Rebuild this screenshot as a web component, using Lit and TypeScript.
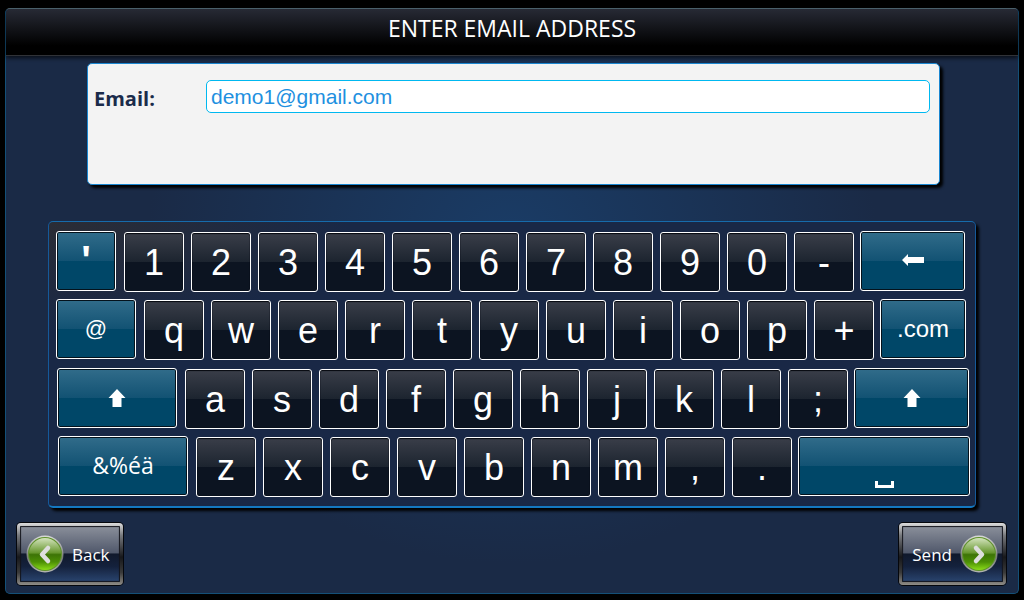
import { LitElement, html, css, svg, nothing } from "lit";
import { customElement, property, state } from "lit/decorators.js";
import { styleMap } from "lit/directives/style-map.js";

type Row = { lead: string; leadSize: number; keys: string; trail: string; trailSize: number };

const ROWS: Row[] = [
  { lead: "'", leadSize: 60, keys: "1234567890-", trail: "backspace", trailSize: 105 },
  { lead: "@", leadSize: 80, keys: "qwertyuiop+", trail: ".com", trailSize: 86 },
  { lead: "shift", leadSize: 120, keys: "asdfghjkl;", trail: "shift", trailSize: 115 },
  { lead: "&%éä", leadSize: 130, keys: "zxcvbnm,.", trail: "space", trailSize: 172 },
];

// One letter key plus its gap; the letter block also carries its side spacing.
const PITCH = 67;
const KEY_GAP = 7;
const SIDE_SPACE = 14;

const columns = (row: Row) => {
  const letters = row.keys.length * PITCH - KEY_GAP + SIDE_SPACE;
  return [row.leadSize, letters, row.trailSize].map((n) => `minmax(0, ${n}fr)`).join(" ");
};

@customElement("soft-keyboard")
export class SoftKeyboard extends LitElement {
  static styles = css`
    :host { display: block; }
    .board {
      box-sizing: border-box;
      min-height: 287px;
      display: grid;
      align-content: space-between;
      padding: 9px 5px 9px 7px;
      border: 1px solid #15599a;
      border-top-color: #166bab;
      border-bottom: 2px solid #1478c0;
      border-radius: 5px;
      background:
        radial-gradient(ellipse 300px 110px at 0 0, rgba(48, 46, 48, 0.75), transparent),
        #192846;
      box-shadow: 3px 3px 3px #000;
    }
    .row { display: grid; }
    .row0 { padding-right: 5px; }
    .row1 { padding-right: 4px; }
    .row2 { padding: 0 1px; }
    .row3 { padding-left: 2px; }
    .letters { display: flex; gap: 7px; margin: 1px 6px 0 8px; }
    button {
      box-sizing: border-box;
      height: 60px;
      min-width: 0;
      padding: 0;
      margin: 0;
      border: 1px solid #fff;
      border-radius: 3px;
      color: #fff;
      font-family: "Liberation Sans", Arial, sans-serif;
    }
    .letter {
      flex: 1 1 0;
      padding-top: 2px;
      font-size: 36px;
      line-height: 56px;
      background: linear-gradient(#3b3f4a, #1c242f 50%, #0c1421 50%, #0c1421) border-box;
      box-shadow: inset 0 1px 1px #05080f, inset 0 0 1px #05080f;
    }
    .special {
      font-size: 24px;
      line-height: 56px;
      background: linear-gradient(#326d8b, #125273 50%, #004768 50%, #004768) border-box;
      box-shadow: inset 0 0 0 1px #04121c;
    }
    .quote {
      padding-bottom: 4px;
      font: 700 40px/40px "Open Sans", sans-serif;
    }
    .symbols {
      padding-bottom: 2px;
      font-family: "Open Sans", sans-serif;
      font-size: 23px;
    }
    .at { font-size: 22px; }
    .backspace { padding-bottom: 2px; }
    .space { padding-top: 37px; }
    svg { display: block; margin: 0 auto; fill: #fff; }
  `;

  private press(value: string) {
    this.dispatchEvent(new CustomEvent("key", { detail: value }));
  }

  private face(name: string) {
    if (name === "shift")
      return html`<svg width="18" height="18" viewBox="0 0 18 18"><path d="M9 0 17.5 9H13.5V18H4.5V9H.5Z"/></svg>`;
    if (name === "backspace")
      return html`<svg width="22" height="12" viewBox="0 0 22 12"><path d="M0 6 6 0V3H22V9H6V12Z"/></svg>`;
    if (name === "space")
      return html`<svg width="19" height="7" viewBox="0 0 19 7"><path d="M0 0H3V4H16V0H19V7H0Z"/></svg>`;
    return name;
  }

  private special(name: string) {
    const kinds: Record<string, string> = {
      "'": "quote",
      "@": "at",
      "&%éä": "symbols",
      backspace: "backspace",
      space: "space",
    };
    return html`<button
      type="button"
      class="special ${kinds[name] ?? ""}"
      aria-label=${name}
      @click=${() => this.press(name)}
    >${this.face(name)}</button>`;
  }

  render() {
    return html`<div class="board">
      ${ROWS.map(
        (row, i) => html`<div class="row row${i}" style=${styleMap({ gridTemplateColumns: columns(row) })}>
          ${this.special(row.lead)}
          <div class="letters">
            ${[...row.keys].map(
              (k) => html`<button type="button" class="letter" @click=${() => this.press(k)}>${k}</button>`
            )}
          </div>
          ${this.special(row.trail)}
        </div>`
      )}
    </div>`;
  }
}

@customElement("nav-button")
export class NavButton extends LitElement {
  @property() label = "";
  @property() direction: "back" | "forward" = "back";

  static styles = css`
    :host { display: block; }
    button {
      box-sizing: border-box;
      display: flex;
      align-items: center;
      gap: 8px;
      height: 62px;
      margin: 0;
      padding: 0 10px 0 6px;
      border: 3px solid transparent;
      border-radius: 4px;
      color: #fff;
      font: 17px/24px "Open Sans", sans-serif;
      background:
        linear-gradient(#8b909b, #50586b 48%, #10192c 50%, #14213c 72%, #2a4570) padding-box,
        linear-gradient(#dcdcdc, #77797d 20%, #17181b 55%, #3a3a3a 80%, #8f8c86) border-box;
      box-shadow: inset 0 0 1px 1px #14161c, 0 0 0 1px #05070c;
    }
    .forward { flex-direction: row-reverse; padding: 0 5px 0 10px; }
    .text { padding-top: 2px; }
    svg { display: block; }
  `;

  render() {
    const back = this.direction === "back";
    return html`<button type="button" class=${back ? nothing : "forward"}>
      <svg width="38" height="40" viewBox="0 0 38 40" aria-hidden="true">
        <defs>
          <linearGradient id="ring" x1="0" y1="0" x2="0" y2="1">
            <stop offset="0" stop-color="#d9dbd8"/><stop offset=".6" stop-color="#777c78"/><stop offset="1" stop-color="#b4b6b2"/>
          </linearGradient>
          <linearGradient id="ball" x1="0" y1="0" x2="0" y2="1">
            <stop offset="0" stop-color="#d3e3bd"/><stop offset=".46" stop-color="#68982f"/>
            <stop offset=".52" stop-color="#3d7406"/><stop offset=".75" stop-color="#4c8f05"/><stop offset="1" stop-color="#8bdd18"/>
          </linearGradient>
        </defs>
        <circle cx="19" cy="20" r="18.5" fill="url(#ring)"/>
        <circle cx="19" cy="20" r="17" fill="#5f912a"/>
        <circle cx="19" cy="20" r="16" fill="url(#ball)"/>
        ${svg`<path d=${back ? "M22 14 16 20.500 22 27" : "M16 14 22 20.500 16 27"} fill="none" stroke="#dedede" stroke-width="4.500" stroke-linecap="round" stroke-linejoin="round"/>`}
      </svg>
      <span class="text">${this.label}</span>
    </button>`;
  }
}

@customElement("app-root")
export class AppRoot extends LitElement {
  @state() private email = "demo1@gmail.com";

  static styles = css`
    :host {
      display: flex;
      box-sizing: border-box;
      min-height: 100vh;
      padding: 8px 5px 6px;
      background: #000;
    }
    .frame {
      flex: 1;
      min-width: 0;
      display: flex;
      flex-direction: column;
      border: 1px solid #145078;
      border-top-color: #526a76;
      border-radius: 5px;
      background: radial-gradient(ellipse 36% 55% at 50% 40%, #1a3c66, #1a2a46) #1a2a46;
    }
    header {
      border-bottom: 1px solid #303237;
      border-radius: 4px 4px 0 0;
      background: linear-gradient(#272a35, #000 80%);
      box-shadow: 0 2px 4px rgba(0, 0, 0, 0.7);
    }
    h1 {
      margin: 0;
      padding-bottom: 8px;
      color: #fff;
      text-align: center;
      font: 400 23px/38px "Open Sans", sans-serif;
    }
    .card {
      box-sizing: border-box;
      display: flex;
      align-items: flex-start;
      min-height: 122px;
      margin: 7px 78px 36px 81px;
      padding: 16px 9px 16px 6px;
      border: 1px solid #1a86d0;
      border-radius: 5px;
      background: #f3f3f3;
      box-shadow: 3px 3px 3px #000;
    }
    label {
      flex: 0 0 112px;
      color: #1a2b4a;
      font: 700 20px/38px "Open Sans", sans-serif;
    }
    input {
      box-sizing: border-box;
      flex: 1;
      min-width: 0;
      height: 33px;
      padding: 0 4px;
      border: 1px solid #00b8f0;
      border-radius: 5px;
      outline: none;
      background: #fff;
      color: #1e90e0;
      font: 21px/31px "Liberation Sans", Arial, sans-serif;
    }
    soft-keyboard { margin: 0 42px; }
    footer {
      display: flex;
      justify-content: space-between;
      margin-top: auto;
      padding: 15px 12px 8px 11px;
    }
  `;

  private onKey(event: CustomEvent<string>) {
    const key = event.detail;
    if (key === "backspace") this.email = this.email.slice(0, -1);
    else if (key === "space") this.email += " ";
    else if (key !== "shift" && key !== "&%éä") this.email += key;
  }

  render() {
    return html`<main class="frame">
      <header><h1>ENTER EMAIL ADDRESS</h1></header>
      <section class="card">
        <label for="email">Email:</label>
        <input
          id="email"
          type="text"
          .value=${this.email}
          @input=${(e: Event) => (this.email = (e.target as HTMLInputElement).value)}
        />
      </section>
      <soft-keyboard @key=${this.onKey}></soft-keyboard>
      <footer>
        <nav-button label="Back" direction="back"></nav-button>
        <nav-button label="Send" direction="forward"></nav-button>
      </footer>
    </main>`;
  }
}
